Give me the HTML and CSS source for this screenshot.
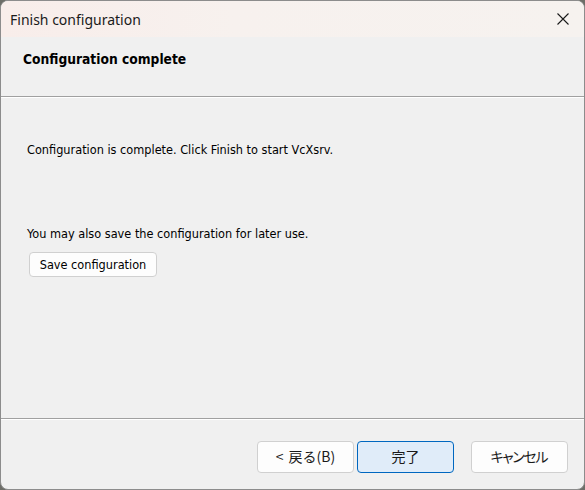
FILE: index.html
```html
<!DOCTYPE html>
<html lang="ja">
<head>
<meta charset="utf-8">
<title>Finish configuration</title>
<link rel="stylesheet" href="styles.css">
</head>
<body>
<div class="window">
  <div class="titlebar">
    <span class="title">Finish configuration</span>
    <button class="close" aria-label="Close">
      <svg width="12" height="12" viewBox="0 0 12 12"><path d="M0.5 0.5L11.5 11.5M11.5 0.5L0.5 11.5" stroke="#1a1a1a" stroke-width="1.1" fill="none"/></svg>
    </button>
  </div>
  <div class="header">
    <h1 class="heading">Configuration complete</h1>
  </div>
  <div class="content">
    <p class="msg">Configuration is complete. Click Finish to start VcXsrv.</p>
    <p class="msg msg-save">You may also save the configuration for later use.</p>
    <button class="btn btn-save">Save configuration</button>
  </div>
  <div class="footer">
    <button class="btn btn-nav btn-back">&lt;&nbsp;戻る(B)</button>
    <button class="btn btn-nav btn-default">完了</button>
    <button class="btn btn-nav btn-cancel">キャンセル</button>
  </div>
</div>
</body>
</html>
```
FILE: styles.css
```css
html, body {
  margin: 0;
  padding: 0;
  background: #6d6e68;
}

.window {
  box-sizing: border-box;
  width: 585px;
  height: 490px;
  border: 1px solid #8c8c8c;
  border-radius: 8px;
  overflow: hidden;
  background: #f0f0f0;
  display: flex;
  flex-direction: column;
  font-family: "DejaVu Sans", sans-serif;
  font-stretch: condensed;
  color: #000;
}

.titlebar {
  height: 36px;
  flex: none;
  display: flex;
  align-items: center;
  justify-content: space-between;
  background: linear-gradient(90deg, #f8edea 0%, #f7f1ee 40%, #f6f2ef 100%);
}

.title {
  font-family: "Noto Sans", sans-serif;
  font-stretch: normal;
  font-size: 14px;
  color: #1a1a1a;
  padding-left: 9px;
  padding-top: 1px;
}

.close {
  width: 42px;
  height: 36px;
  border: 0;
  background: transparent;
  padding: 0;
  margin-right: 0;
  display: flex;
  align-items: center;
  justify-content: center;
}

.header {
  height: 59px;
  flex: none;
  border-bottom: 1px solid #a0a0a0;
  box-shadow: 0 1px 0 #ffffff;
  margin-bottom: 1px;
}

.heading {
  margin: 0;
  padding: 13px 0 0 22px;
  font-size: 13.7px;
  font-weight: bold;
  line-height: 19px;
}

.content {
  flex: 1;
  padding: 0 0 0 26px;
  border-bottom: 1px solid #a0a0a0;
  box-shadow: 0 1px 0 #ffffff;
  margin-bottom: 1px;
}

.msg {
  margin: 0;
  font-size: 12.6px;
  line-height: 16px;
}

.msg:first-child {
  margin-top: 44px;
}

.msg-save {
  margin-top: 68px;
}

.btn {
  font-family: inherit;
  font-stretch: inherit;
  background: #fdfdfd;
  border: 1px solid #d0d0d0;
  border-radius: 4px;
  color: #000;
  padding: 0;
}

.btn-save {
  margin: 10px 0 0 2px;
  width: 128px;
  height: 25px;
  font-size: 12.6px;
}

.footer {
  height: 69px;
  flex: none;
  display: flex;
  align-items: flex-start;
  padding: 21px 0 0 256px;
  box-sizing: border-box;
  gap: 3px;
}

.btn-nav {
  width: 97px;
  height: 32px;
  font-family: "Noto Sans CJK JP", sans-serif;
  font-stretch: normal;
  font-size: 14px;
  font-feature-settings: "palt";
  color: #1a1a1a;
  line-height: 28px;
  padding-bottom: 2px;
}

.btn-back {
  font-feature-settings: normal;
  word-spacing: 2px;
}

.btn-default {
  background: #e0ecf9;
  border-color: #0067c0;
}

.btn-cancel {
  margin-left: 14px;
  letter-spacing: -1.4px;
  text-indent: -1.4px;
}
```
